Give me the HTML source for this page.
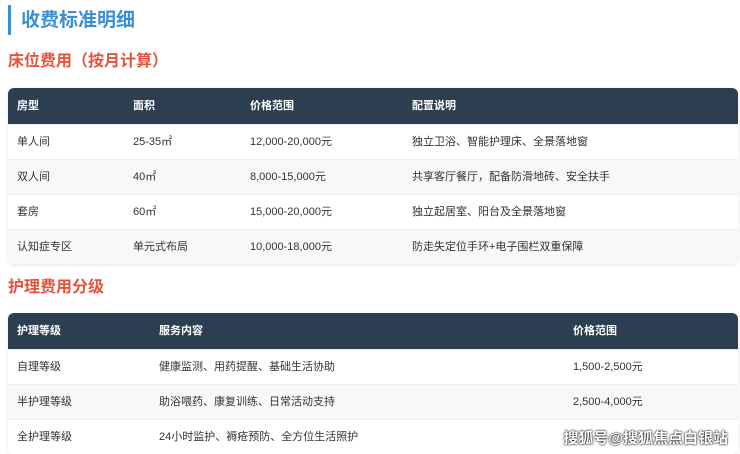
<!DOCTYPE html>
<html><head><meta charset="utf-8"><style>
*{margin:0;padding:0;box-sizing:border-box}
body{width:740px;height:454px;overflow:hidden;background:#fff;font-family:"Liberation Sans","Noto Sans CJK SC",sans-serif;position:relative;color:#333}
.bar{position:absolute;left:8px;top:5px;width:3px;height:30px;background:#3a8fd6}
.t1{position:absolute;left:21px;top:6px;font-size:19px;font-weight:bold;color:#3a8fd6;line-height:30px}
.h2{position:absolute;left:8px;font-size:16px;font-weight:bold;color:#e5533d;line-height:22px}
.tbl{position:absolute;left:8px;width:730px;border-radius:6px;overflow:hidden;box-shadow:0 1px 4px rgba(0,0,0,.1)}
.row{position:relative;height:35px;font-size:11px;line-height:35px}
.row span{position:absolute;top:0}
.hd{background:#2d3e50;color:#fff;font-weight:bold;height:36px;line-height:36px}
.w{background:#fff}.g{background:#f7f8fa}
.row+.row{border-top:1px solid #eceef1}
.wm{position:absolute;right:12px;top:427px;font-size:15px;color:#fff;font-weight:bold;text-shadow:0 0 2px #000,0 0 1px #000;letter-spacing:0}
</style></head><body>
<div class="bar"></div><div class="t1">收费标准明细</div>
<div class="h2" style="top:51px">床位费用（按月计算）</div>
<div class="tbl" style="top:88px">
<div class="row hd"><span style="left:9px">房型</span><span style="left:125px">面积</span><span style="left:242px">价格范围</span><span style="left:404px">配置说明</span></div>
<div class="row w"><span style="left:9px">单人间</span><span style="left:125px">25-35㎡</span><span style="left:242px">12,000-20,000元</span><span style="left:404px">独立卫浴、智能护理床、全景落地窗</span></div>
<div class="row g"><span style="left:9px">双人间</span><span style="left:125px">40㎡</span><span style="left:242px">8,000-15,000元</span><span style="left:404px">共享客厅餐厅，配备防滑地砖、安全扶手</span></div>
<div class="row w"><span style="left:9px">套房</span><span style="left:125px">60㎡</span><span style="left:242px">15,000-20,000元</span><span style="left:404px">独立起居室、阳台及全景落地窗</span></div>
<div class="row g"><span style="left:9px">认知症专区</span><span style="left:125px">单元式布局</span><span style="left:242px">10,000-18,000元</span><span style="left:404px">防走失定位手环+电子围栏双重保障</span></div>
</div>
<div class="h2" style="top:277px">护理费用分级</div>
<div class="tbl" style="top:313px">
<div class="row hd"><span style="left:9px">护理等级</span><span style="left:151px">服务内容</span><span style="left:565px">价格范围</span></div>
<div class="row w"><span style="left:9px">自理等级</span><span style="left:151px">健康监测、用药提醒、基础生活协助</span><span style="left:565px">1,500-2,500元</span></div>
<div class="row g"><span style="left:9px">半护理等级</span><span style="left:151px">助浴喂药、康复训练、日常活动支持</span><span style="left:565px">2,500-4,000元</span></div>
<div class="row w"><span style="left:9px">全护理等级</span><span style="left:151px">24小时监护、褥疮预防、全方位生活照护</span><span style="left:565px"></span></div>
</div>
<div class="wm">搜狐号@搜狐焦点白银站</div>
</body></html>
